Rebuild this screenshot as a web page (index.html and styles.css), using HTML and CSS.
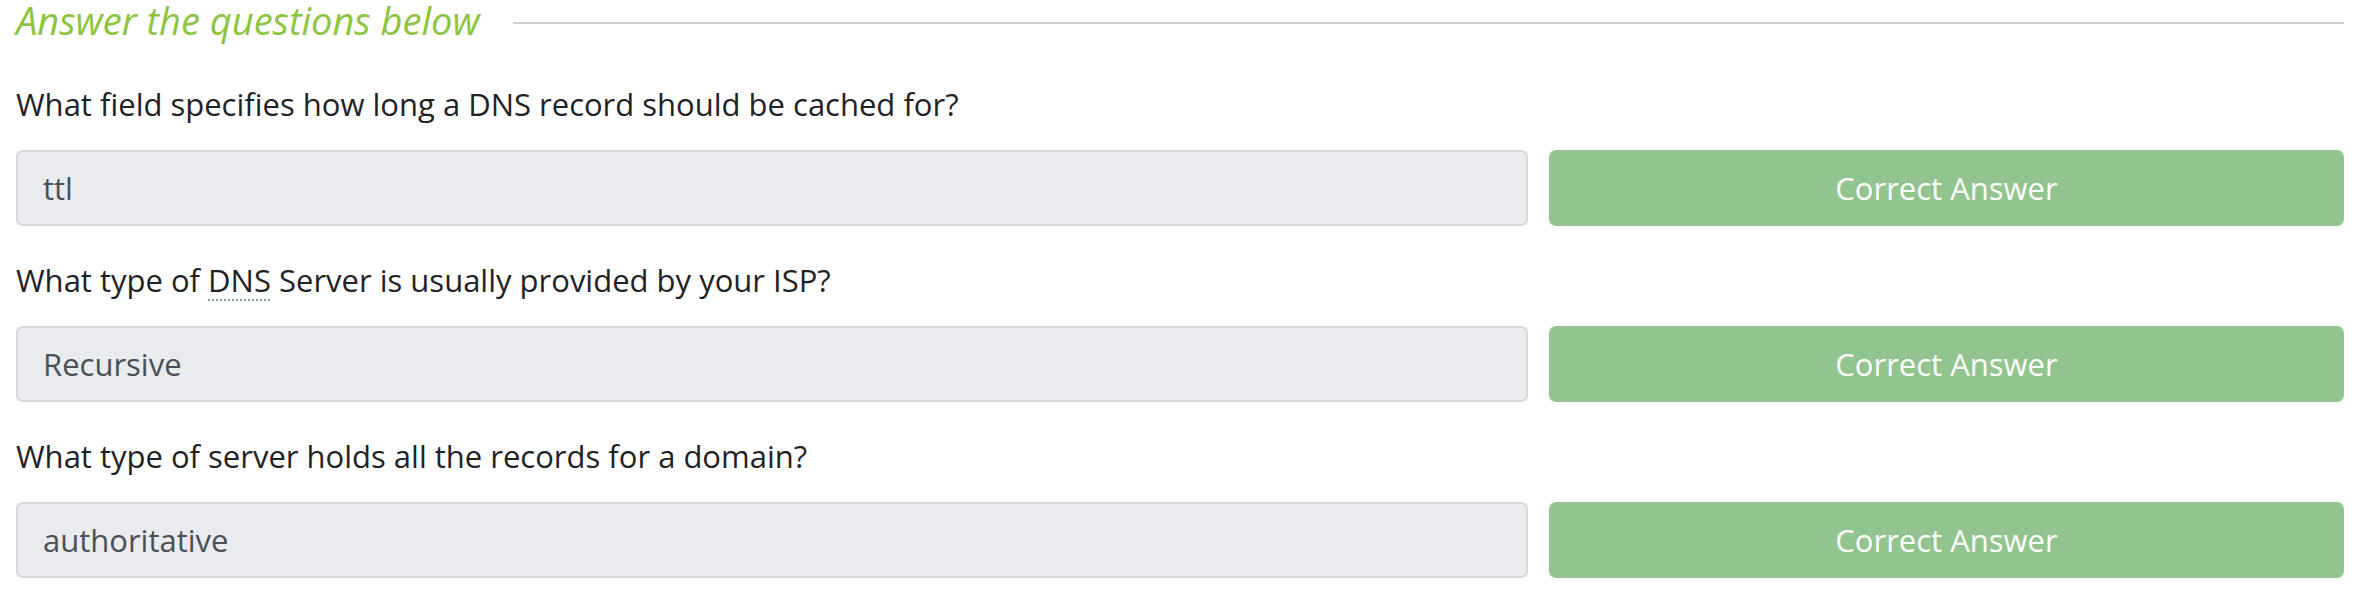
FILE: index.html
```html
<!DOCTYPE html>
<html lang="en">
<head>
<meta charset="utf-8">
<title>Answer the questions below</title>
<link rel="stylesheet" href="styles.css">
</head>
<body>
<section class="task">
  <header class="task-head">
    <h2 class="task-title">Answer the questions below</h2>
    <div class="task-rule"></div>
  </header>

  <div class="question">
    <p class="question-text">What field specifies how long a DNS record should be cached for?</p>
    <div class="answer-row">
      <div class="answer-field">ttl</div>
      <button class="answer-btn" type="button">Correct Answer</button>
    </div>
  </div>

  <div class="question">
    <p class="question-text">What type of <abbr class="term" title="Domain Name System">DNS</abbr> Server is usually provided by your ISP?</p>
    <div class="answer-row">
      <div class="answer-field">Recursive</div>
      <button class="answer-btn" type="button">Correct Answer</button>
    </div>
  </div>

  <div class="question">
    <p class="question-text">What type of server holds all the records for a domain?</p>
    <div class="answer-row">
      <div class="answer-field">authoritative</div>
      <button class="answer-btn" type="button">Correct Answer</button>
    </div>
  </div>
</section>
</body>
</html>
```

FILE: styles.css
```css
html, body {
  margin: 0;
  padding: 0;
  background: #ffffff;
}

body {
  font-family: "Open Sans", "Noto Sans", sans-serif;
  color: #212529;
}

.task {
  width: 2328px;
  padding: 0 0 0 16px;
}

.task-head {
  box-sizing: border-box;
  display: flex;
  align-items: flex-start;
  height: 46px;
  padding-top: 2px;
  gap: 33px;
}

.task-title {
  margin: 0;
  font-size: 38px;
  line-height: 36px;
  font-style: italic;
  font-weight: 400;
  color: #8bc540;
  white-space: nowrap;
}

.task-rule {
  flex: 1;
  height: 2px;
  margin-top: 20px;
  background: #cfcfcf;
}

.question {
  margin-top: 38px;
}

.question + .question {
  margin-top: 34px;
}

.question-text {
  margin: 0 0 26px 0;
  font-size: 31px;
  line-height: 40px;
  color: #1f2326;
}

.term {
  text-decoration: underline dotted #8e9aa6;
  text-decoration-thickness: 2px;
  text-underline-offset: 7px;
}

.answer-row {
  display: flex;
  gap: 21px;
  height: 76px;
}

.answer-field {
  box-sizing: border-box;
  width: 1512px;
  height: 76px;
  display: flex;
  align-items: center;
  padding: 0 25px;
  background: #e9ebef;
  border: 2px solid #d6d9dd;
  border-radius: 7px;
  font-size: 31px;
  color: #495057;
}

.answer-btn {
  flex: 1;
  height: 76px;
  border: none;
  border-radius: 7px;
  background: #91c48e;
  color: #ffffff;
  font-family: inherit;
  font-size: 31px;
  padding: 0;
  cursor: default;
}
```
